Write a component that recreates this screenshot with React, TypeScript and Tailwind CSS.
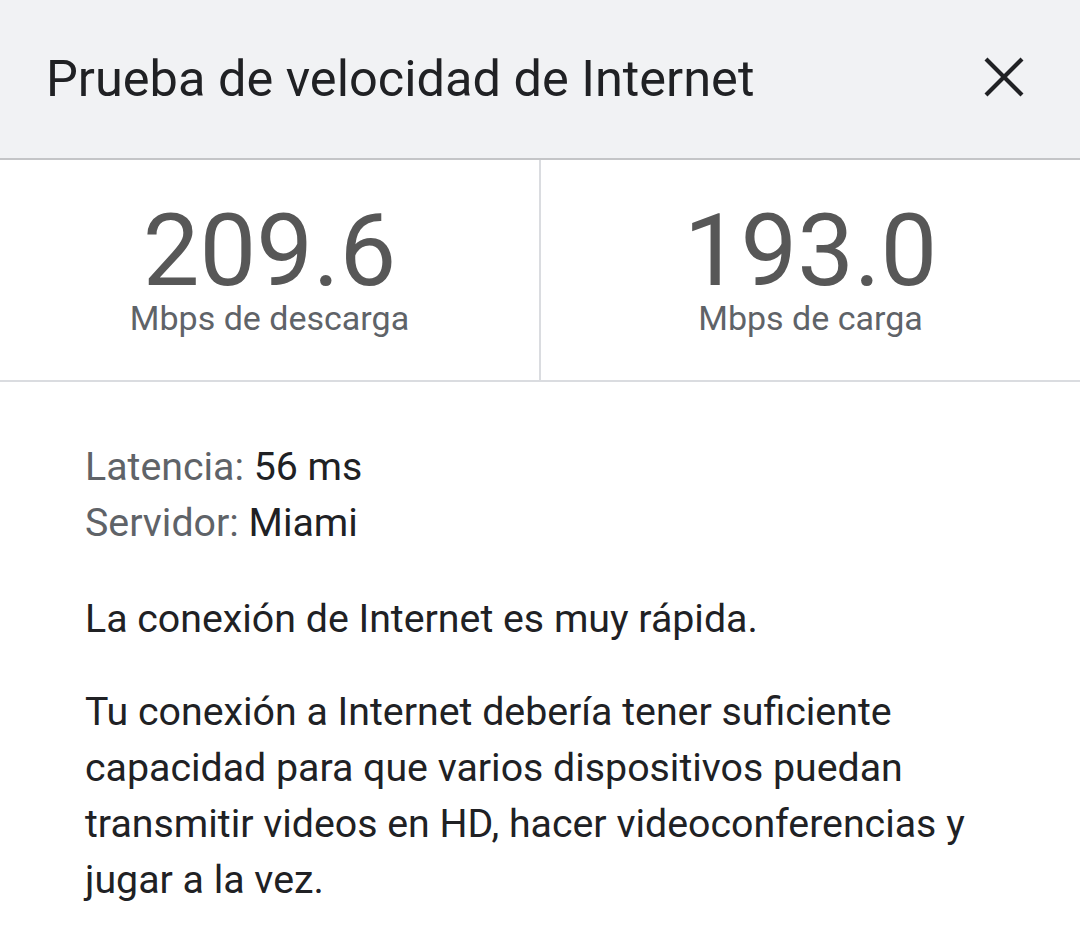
import React from "react";

export default function App() {
  return (
    <div className="w-[1080px] h-[942px] bg-white overflow-hidden" style={{ fontFamily: "Roboto, 'Noto Sans', sans-serif" }}>
      <div className="h-[160px] bg-[#f1f2f4] border-b-2 border-[#c4c5c7] flex items-center justify-between pl-[46px] pr-[56px]">
        <div className="text-[50.5px] leading-[58px] text-[#202124]">Prueba de velocidad de Internet</div>
        <svg width="40" height="40" viewBox="0 0 40 40" className="mt-[-4px]">
          <path d="M2 2 L38 38 M38 2 L2 38" stroke="#202124" strokeWidth="4.2" strokeLinecap="butt" />
        </svg>
      </div>
      <div className="flex h-[222px] border-b-2 border-[#dadce0]">
        <div className="flex-1 flex flex-col items-center pt-[45px] border-r-2 border-[#dadce0]">
          <div className="text-[101px] leading-[92px] text-[#575757]">209.6</div>
          <div className="mt-[4px] text-[34px] leading-[34px] text-[#5f6368]">Mbps de descarga</div>
        </div>
        <div className="flex-1 flex flex-col items-center pt-[45px]">
          <div className="text-[101px] leading-[92px] text-[#575757]">193.0</div>
          <div className="mt-[4px] text-[34px] leading-[34px] text-[#5f6368]">Mbps de carga</div>
        </div>
      </div>
      <div className="pl-[85px] pt-[57px] text-[39.3px] leading-[56px] text-[#202124]">
        <div><span className="text-[#5f6368]">Latencia:</span> 56 ms</div>
        <div><span className="text-[#5f6368]">Servidor:</span> Miami</div>
        <p className="mt-[40px]">La conexión de Internet es muy rápida.</p>
        <p className="mt-[37px]">
          Tu conexión a Internet debería tener suficiente<br />
          capacidad para que varios dispositivos puedan<br />
          transmitir videos en HD, hacer videoconferencias y<br />
          jugar a la vez.
        </p>
      </div>
    </div>
  );
}
